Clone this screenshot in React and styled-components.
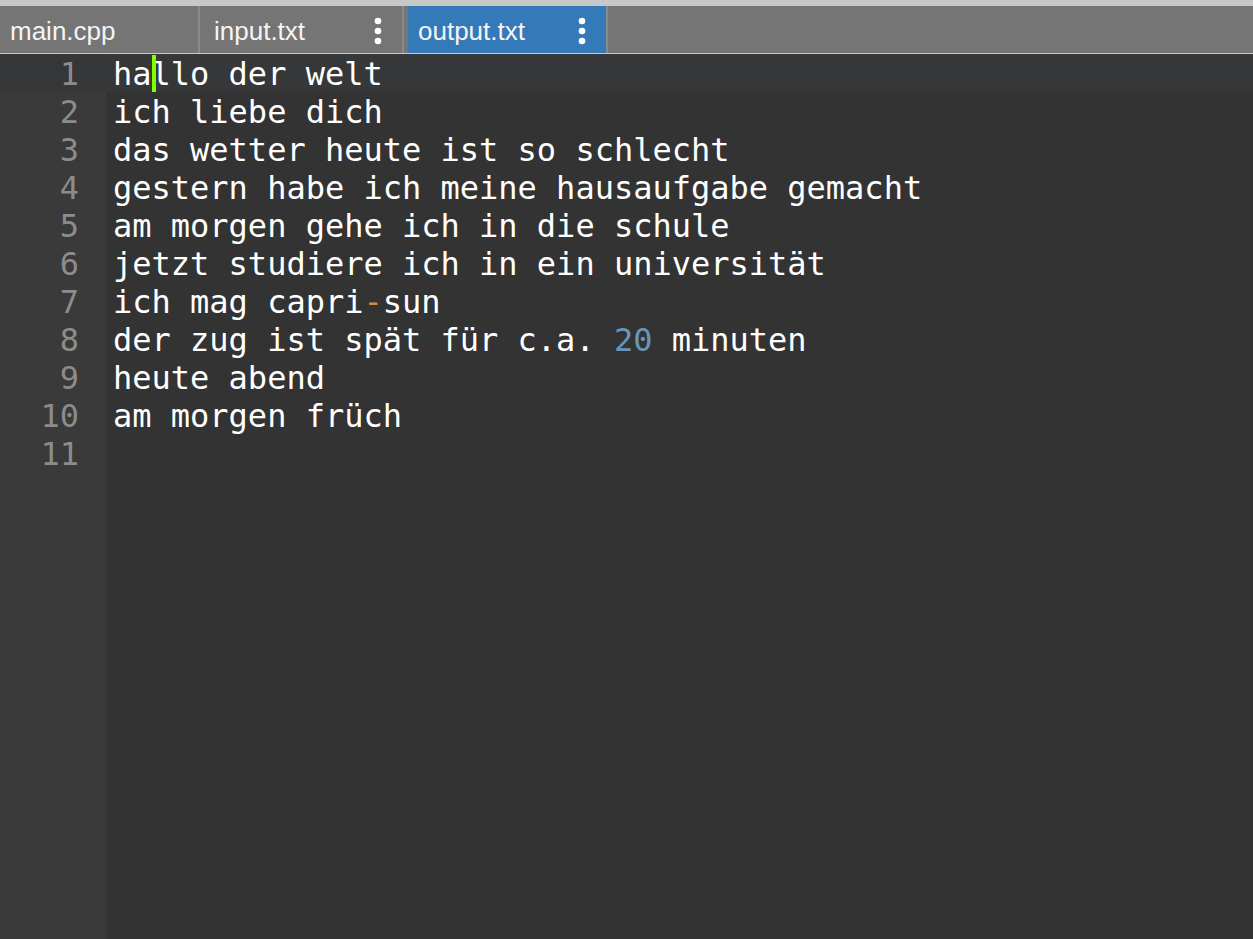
import React from 'react'
import styled, { createGlobalStyle } from 'styled-components'

const GlobalStyle = createGlobalStyle`
  html, body {
    margin: 0;
    padding: 0;
    background: #333333;
  }
`

const tabs = [
    { name: 'main.cpp', menu: false, active: false },
    { name: 'input.txt', menu: true, active: false },
    { name: 'output.txt', menu: true, active: true },
]

// each line is a list of [text, kind]
const lines = [
    [['ha', 'plain'], ['', 'caret'], ['llo der welt', 'plain']],
    [['ich liebe dich', 'plain']],
    [['das wetter heute ist so schlecht', 'plain']],
    [['gestern habe ich meine hausaufgabe gemacht', 'plain']],
    [['am morgen gehe ich in die schule', 'plain']],
    [['jetzt studiere ich in ein universität', 'plain']],
    [['ich mag capri', 'plain'], ['-', 'operator'], ['sun', 'plain']],
    [['der zug ist spät für c.a. ', 'plain'], ['20', 'number'], [' minuten', 'plain']],
    [['heute abend', 'plain']],
    [['am morgen früch', 'plain']],
    [],
]

const ACTIVE_LINE = 0

const Dots = () => (
    <svg width="8" height="28" viewBox="0 0 8 28">
        <circle cx="4" cy="4" r="3.3" fill="#fff" />
        <circle cx="4" cy="14" r="3.3" fill="#fff" />
        <circle cx="4" cy="24" r="3.3" fill="#fff" />
    </svg>
)

const App = () => {
    return (
        <Page>
            <GlobalStyle />
            <TabBar>
                {tabs.map((t) => (
                    <Tab key={t.name} $active={t.active}>
                        <TabLabel>{t.name}</TabLabel>
                        {t.menu && <Menu><Dots /></Menu>}
                    </Tab>
                ))}
            </TabBar>
            <Editor>
                <Gutter>
                    {lines.map((_, i) => (
                        <LineNo key={i} $active={i === ACTIVE_LINE}>{i + 1}</LineNo>
                    ))}
                </Gutter>
                <Code>
                    {lines.map((parts, i) => (
                        <CodeLine key={i} $active={i === ACTIVE_LINE}>
                            {parts.map(([text, kind], j) =>
                                kind === 'caret'
                                    ? <Caret key={j} />
                                    : <Token key={j} $kind={kind}>{text}</Token>
                            )}
                        </CodeLine>
                    ))}
                </Code>
            </Editor>
        </Page>
    )
}

const Page = styled.div`
    display: flex;
    flex-direction: column;
    height: 939px;
    width: 1253px;
    overflow: hidden;
    background: #333333;
`

const TabBar = styled.div`
    display: flex;
    height: 47px;
    border-top: 6px solid #c8c8c8;
    border-bottom: 1px solid #c9c9c9;
    background: #757575;
    flex-shrink: 0;
`

const Tab = styled.div`
    display: flex;
    align-items: center;
    width: 188px;
    padding-left: 10px;
    border-right: 2px solid #8a8a8a;
    background: ${(p) => (p.$active ? '#347ab8' : '#757575')};
    & + & {
        margin-left: 4px;
    }
`

const TabLabel = styled.span`
    flex: 1;
    font-family: "Liberation Sans", Arial, sans-serif;
    font-size: 26px;
    color: #f4f4f4;
    padding-top: 4px;
`

const Menu = styled.span`
    display: flex;
    align-items: center;
    margin-right: 20px;
    padding-top: 2px;
`

const Editor = styled.div`
    flex: 1;
    display: grid;
    grid-template-columns: 106px 1fr;
    font-family: "DejaVu Sans Mono", "Liberation Mono", monospace;
    font-size: 32px;
`

const Gutter = styled.div`
    display: flex;
    flex-direction: column;
    background: #3a3a3a;
`

const LineNo = styled.div`
    height: 38px;
    line-height: 40px;
    text-align: right;
    padding-right: 27px;
    color: #8c8c8c;
    background: ${(p) => (p.$active ? '#353638' : 'transparent')};
`

const Code = styled.div`
    display: flex;
    flex-direction: column;
    background: #333333;
`

const CodeLine = styled.div`
    height: 38px;
    line-height: 40px;
    padding-left: 7px;
    white-space: pre;
    color: #ffffff;
    background: ${(p) => (p.$active ? '#363739' : 'transparent')};
`

const tokenColors = {
    plain: '#ffffff',
    operator: '#d68b3c',
    number: '#6897bb',
}

const Token = styled.span`
    color: ${(p) => tokenColors[p.$kind]};
`

const Caret = styled.span`
    position: relative;
    display: inline-block;
    width: 0;
    height: 38px;
    vertical-align: top;
    &::after {
        content: '';
        position: absolute;
        left: 0;
        top: 1px;
        width: 4px;
        height: 37px;
        background: #7fff00;
    }
`

export default App
